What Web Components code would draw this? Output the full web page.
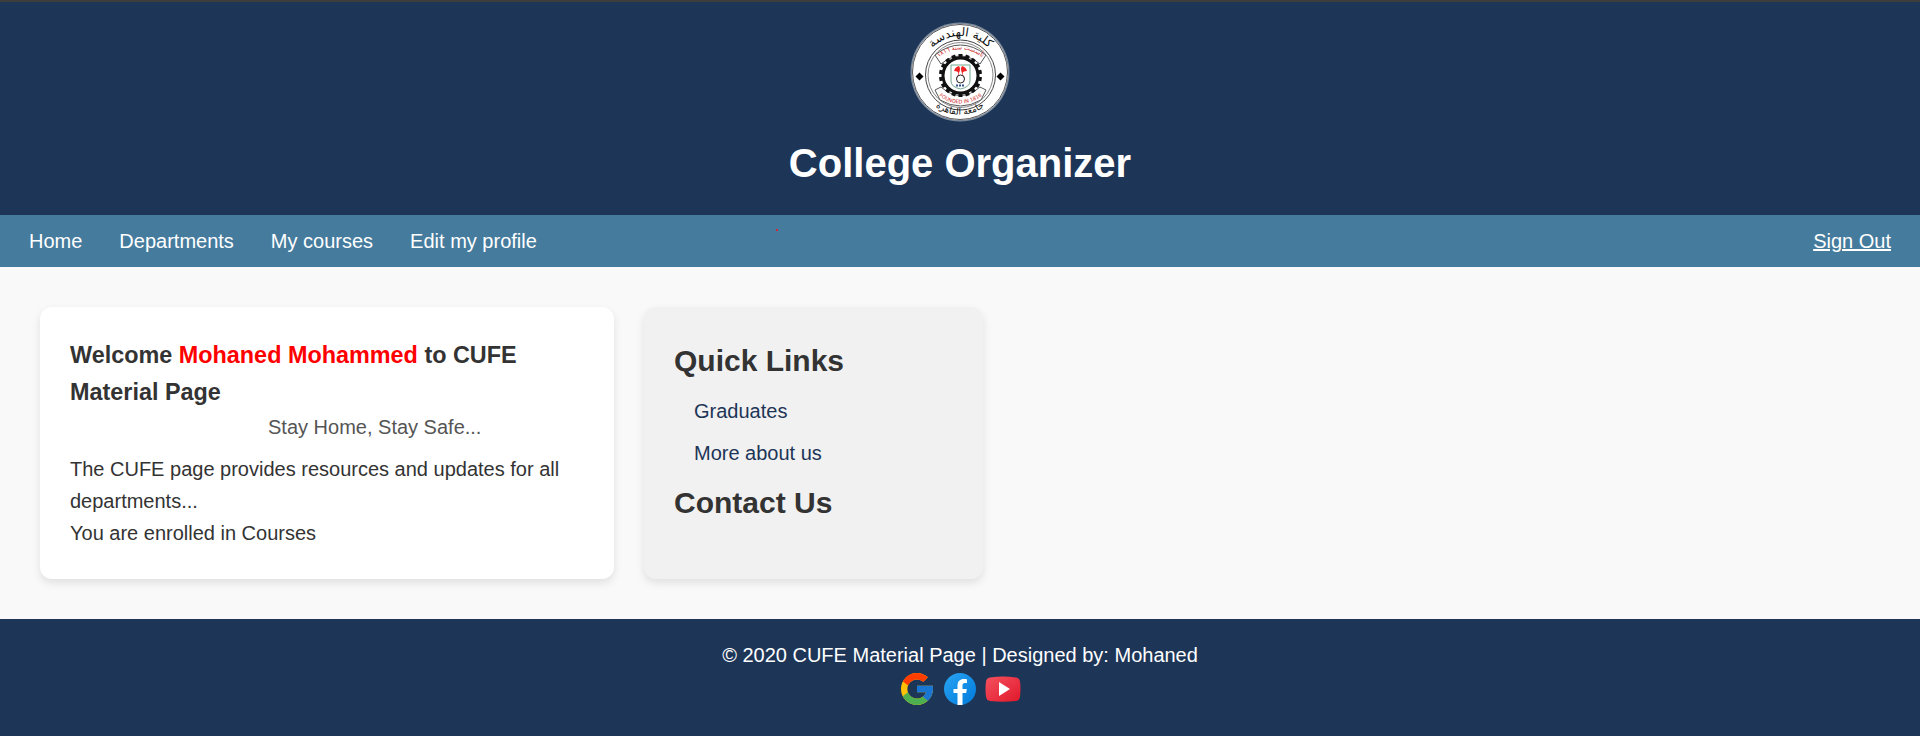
<!DOCTYPE html>
<html lang="en">
<head>
<meta charset="utf-8">
<title>College Organizer</title>
<style>
body { margin: 0; min-height: 100vh; display: flex; flex-direction: column; background: #f9f9f9; color: #333; font: 20px/32px "Liberation Sans", Arial, sans-serif; }
page-footer { flex: 1; }
.name { color: #f00; }
</style>
</head>
<body>
<page-header>College Organizer</page-header>
<page-nav></page-nav>
<page-main>
  <welcome-card><span class="name">Mohaned Mohammed</span></welcome-card>
  <links-card></links-card>
</page-main>
<page-footer>© 2020 CUFE Material Page | Designed by: Mohaned</page-footer>
<script>
function define(name, html) {
  const t = document.createElement('template');
  t.innerHTML = html;
  customElements.define(name, class extends HTMLElement {
    constructor() {
      super();
      this.attachShadow({ mode: 'open' }).append(t.content.cloneNode(true));
    }
  });
}

// Teeth of the gear in the crest
const teeth = Array.from({ length: 18 }, (_, i) =>
  `<rect x="48.500" y="32" width="4" height="5" transform="rotate(${i * 20} 50.500 53.500)"/>`).join('');

define('college-crest', `
<style>
  :host { display: block; width: 100px; height: 100px; }
  svg { display: block; }
</style>
<svg width="100" height="100" viewBox="0 0 100 100" role="img" aria-label="Faculty of Engineering crest">
  <circle cx="50" cy="50" r="49.500" fill="#7d8a9c"/>
  <circle cx="50" cy="50" r="48" fill="#fff"/>
  <circle cx="50" cy="50" r="47.500" fill="none" stroke="#555"/>
  <g fill="none" stroke="#444">
    <circle cx="50.500" cy="53" r="35"/><circle cx="50.500" cy="53" r="32.500" stroke="#888"/>
  </g>
  <path d="M9.500 50.500l4 4-4 4-4-4zM90.500 50.500l4 4-4 4-4-4z" fill="#000"/>
  <defs>
    <path id="t" d="M17 34A38 38 0 0 1 84 34"/><path id="b" d="M20 80A42 42 0 0 0 80 80"/>
    <path id="rt" d="M28 36A34 34 0 0 1 73 36"/><path id="rb" d="M27 72A34 34 0 0 0 74 72"/>
  </defs>
  <g font-family="DejaVu Sans, sans-serif" text-anchor="middle">
    <text font-size="12" fill="#111"><textPath href="#t" startOffset="50%">كلية الهندسة</textPath></text>
    <text font-size="9" fill="#111"><textPath href="#b" startOffset="50%">جامعة القاهرة</textPath></text>
    <path d="M25 33Q50.500 13 76 33L70 42Q50.500 26 31 42z" fill="#fff" stroke="#555"/>
    <path d="M25 68L31 65Q50.500 82 70 65L76 68 71 78Q50.500 90 30 78z" fill="#fff" stroke="#555"/>
    <text font-size="6" fill="#c22"><textPath href="#rt" startOffset="50%">تأسست سنة ١٨١٦</textPath></text>
    <text font-size="5" fill="#c22"><textPath href="#rb" startOffset="50%">FOUNDED IN 1816</textPath></text>
  </g>
  <circle cx="50.500" cy="53.500" r="17.500" fill="#fff" stroke="#111" stroke-width="3"/>
  <g fill="#111">${teeth}</g>
  <path d="M41 43h19v16q0 6-9.500 8-9.500-2-9.500-8z" fill="#fff" stroke="#72a98c"/>
  <path d="M46 56q3-3 2-6-2-1-4-1 1-4 5-5 2 3 0 7l-1 5zM55 56q-3-3-2-6 2-1 4-1-1-4-5-5-2 3 0 7l1 5z" fill="#e22"/>
  <circle cx="50.500" cy="57" r="4" fill="#fff" stroke="#222"/>
  <path d="M46 63.500h9" stroke="#358" stroke-width="2" stroke-dasharray="2 1"/>
</svg>`);

define('page-header', `
<style>
  :host { display: flex; flex-direction: column; align-items: center; gap: 9px; padding: 20px; border-top: 2px solid #3d3d3d; background: #1d3557; color: #fff; }
  h1 { margin: 0; font-size: 40px; line-height: 64px; }
</style>
<college-crest></college-crest>
<h1><slot></slot></h1>`);

define('page-nav', `
<style>
  :host { display: block; position: relative; background: #457b9d; }
  nav { display: flex; justify-content: space-between; padding: 10px 29px; }
  ul { display: flex; gap: 37px; margin: 0; padding: 0; list-style: none; }
  a { color: #fff; }
  ul a { text-decoration: none; }
  i { position: absolute; left: 776px; top: 14px; width: 2px; height: 2px; background: #d6283c; }
</style>
<nav>
  <ul>
    <li><a href="#home">Home</a></li>
    <li><a href="#departments">Departments</a></li>
    <li><a href="#courses">My courses</a></li>
    <li><a href="#profile">Edit my profile</a></li>
  </ul>
  <a href="#signout">Sign Out</a>
</nav>
<i></i>`);

define('page-main', `
<style>
  :host { display: grid; grid-template-columns: 574fr 339fr 867fr; gap: 30px; padding: 40px; }
</style>
<slot></slot>`);

const card = `:host { display: block; padding: 30px; border-radius: 12px; box-shadow: 0 4px 8px rgba(0,0,0,.1); }`;

define('welcome-card', `
<style>
  ${card}
  :host { background: #fff; }
  h3 { margin: 0; line-height: 37px; }
  p { margin: 0; }
  .notice { margin-bottom: 10px; padding-left: 198px; color: #555; }
</style>
<h3>Welcome <slot></slot> to CUFE Material Page</h3>
<p class="notice">Stay Home, Stay Safe...</p>
<p>The CUFE page provides resources and updates for all departments...</p>
<p>You are enrolled in Courses</p>`);

define('links-card', `
<style>
  ${card}
  :host { background: #f1f1f1; }
  h2 { margin: 0; font-size: 30px; line-height: 48px; }
  ul { display: grid; gap: 10px; margin: 10px 0; padding-left: 20px; list-style: none; }
  a { color: #1d3557; text-decoration: none; }
</style>
<h2>Quick Links</h2>
<ul>
  <li><a href="#graduates">Graduates</a></li>
  <li><a href="#about">More about us</a></li>
</ul>
<h2>Contact Us</h2>`);

define('page-footer', `
<style>
  :host { display: block; padding: 20px 20px 28px; background: #1d3557; color: #fff; text-align: center; }
  p { margin: 0; }
  div { display: flex; justify-content: center; gap: 7px; }
  svg { display: block; }
</style>
<p><slot></slot></p>
<div>
  <a href="#google" aria-label="Google"><svg width="36" height="36" viewBox="4 4 40 40" overflow="visible"><g transform="translate(24 24) scale(.89) translate(-24 -24)">
    <path fill="#FFC107" d="M43.611 20.083H42V20H24v8h11.303c-1.649 4.657-6.080 8-11.303 8-6.627 0-12-5.373-12-12s5.373-12 12-12c3.059 0 5.842 1.154 7.961 3.039l5.657-5.657C34.046 6.053 29.268 4 24 4 12.955 4 4 12.955 4 24s8.955 20 20 20 20-8.955 20-20c0-1.341-.138-2.650-.389-3.917z"/>
    <path fill="#FF3D00" d="M6.306 14.691l6.571 4.819C14.655 15.108 18.961 12 24 12c3.059 0 5.842 1.154 7.961 3.039l5.657-5.657C34.046 6.053 29.268 4 24 4 16.318 4 9.656 8.337 6.306 14.691z"/>
    <path fill="#4CAF50" d="M24 44c5.166 0 9.860-1.977 13.409-5.192l-6.190-5.238C29.211 35.091 26.715 36 24 36c-5.202 0-9.619-3.317-11.283-7.946l-6.522 5.025C9.505 39.556 16.227 44 24 44z"/>
    <path fill="#1976D2" d="M43.611 20.083H42V20H24v8h11.303c-.792 2.237-2.231 4.166-4.087 5.571l6.193 5.237C36.971 39.205 44 34 44 24c0-1.341-.138-2.650-.389-3.917z"/></g></svg></a>
  <a href="#facebook" aria-label="Facebook"><svg width="36" height="36" viewBox="0 0 36 36">
    <defs><linearGradient id="f" x1="0" y1="0" x2="1" y2="1"><stop offset="0" stop-color="#2aa4f4"/><stop offset="1" stop-color="#007ad9"/></linearGradient></defs>
    <circle cx="18" cy="18" r="16" fill="url(#f)"/>
    <path d="M15.500 34V22H11.500v-4h4v-3c0-5 2.500-7 6.500-7 1.400 0 2.200.1 3 .2V12h-2.200c-1.700 0-2.300.9-2.300 2.700V18H24.800l-.6 4H20.500v12q-2.500.2-5 0z" fill="#fff"/></svg></a>
  <a href="#youtube" aria-label="YouTube"><svg width="36" height="36" viewBox="0 0 36 36">
    <defs><linearGradient id="y" x1="0" y1="0" x2="1" y2="1"><stop offset="0" stop-color="#f5515f"/><stop offset="1" stop-color="#e0182b"/></linearGradient></defs>
    <path d="M5 6.500Q18 4.500 31 6.500 34.500 7 35 10.500 36 18 35 25.500 34.500 29.500 31 30 18 31.500 5 30 1.500 29.500 1 25.500 0 18 1 10.500 1.500 7 5 6.500z" fill="url(#y)"/>
    <path d="M14 11v14l11-7z" fill="#fff"/></svg></a>
</div>`);
</script>
</body>
</html>
